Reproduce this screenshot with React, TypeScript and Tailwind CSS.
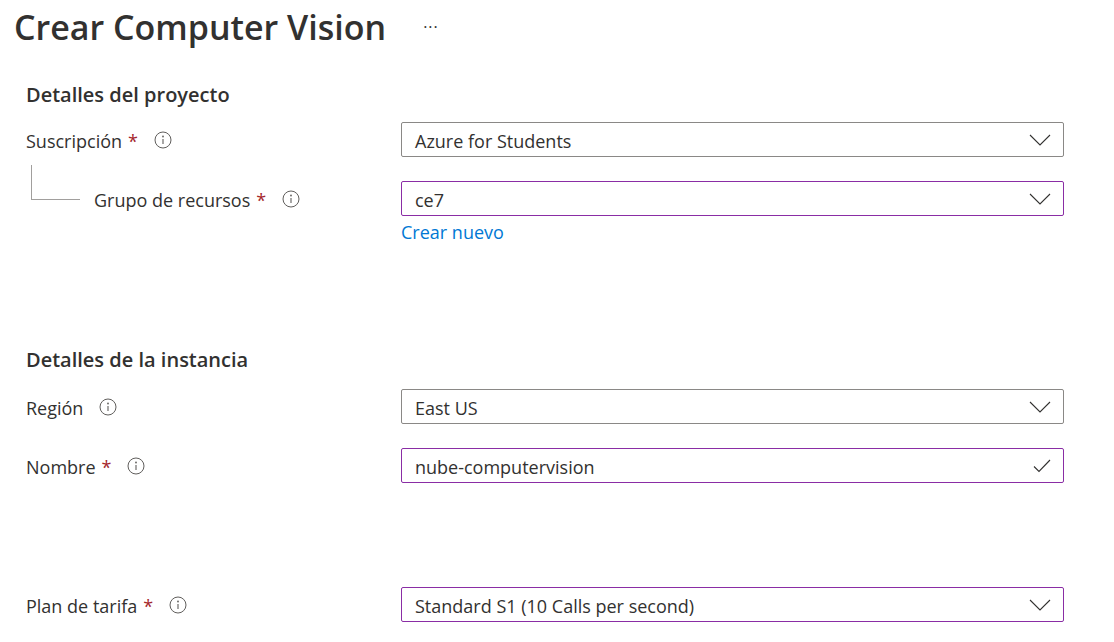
import React from "react";

const font = { fontFamily: '"Open Sans", "Noto Sans", sans-serif' };

const InfoIcon = () => (
  <svg width="18" height="18" viewBox="0 0 18 18" className="ml-[16px] shrink-0">
    <circle cx="9" cy="9" r="8" fill="none" stroke="#605e5c" strokeWidth="1" />
    <circle cx="9" cy="5.5" r="0.9" fill="#605e5c" />
    <path d="M9 8 V13" stroke="#605e5c" strokeWidth="1.1" />
  </svg>
);

const Chevron = () => (
  <svg width="22" height="12" viewBox="0 0 22 12">
    <path d="M1 1 L11 11 L21 1" fill="none" stroke="#323130" strokeWidth="1.1" />
  </svg>
);

const Check = () => (
  <svg width="18" height="14" viewBox="0 0 18 14">
    <path d="M1 7.5 L6 12.5 L17 1" fill="none" stroke="#323130" strokeWidth="1.1" />
  </svg>
);

const Label = ({ text, required }: { text: string; required?: boolean }) => (
  <span className="flex items-center text-[18px] text-[#323130]">
    <span className="pt-[3px]">{text}</span>
    {required && <span className="ml-[6px] pt-[3px] text-[#a4262c]">*</span>}
    <InfoIcon />
  </span>
);

const Field = ({
  value,
  purple,
  icon,
}: {
  value: string;
  purple?: boolean;
  icon: "chevron" | "check";
}) => (
  <div
    className={`flex h-[35px] w-[663px] items-center justify-between rounded-[2px] border pl-[13px] pr-[12px] text-[18px] text-[#323130] ${
      purple ? "border-[#8a2da5]" : "border-[#8a8886]"
    }`}
  >
    <span className="pt-[3px]">{value}</span>
    {icon === "chevron" ? <Chevron /> : <Check />}
  </div>
);

const App = () => {
  return (
    <div className="h-[642px] w-[1114px] overflow-hidden bg-white" style={font}>
      {/* header */}
      <div className="flex h-[54px] items-center pl-[14px]">
        <h1 className="text-[34px] font-semibold leading-none text-[#323130]">Crear Computer Vision</h1>
        <span className="ml-[37px] text-[16px] tracking-[1px] text-[#323130]">···</span>
      </div>

      {/* project details */}
      <h2 className="mt-[27px] pl-[26px] text-[20px] font-semibold leading-[28px] text-[#323130]">
        Detalles del proyecto
      </h2>

      <div className="mt-[13px] flex items-center">
        <div className="w-[401px] pl-[26px]">
          <Label text="Suscripción" required />
        </div>
        <Field value="Azure for Students" icon="chevron" />
      </div>

      <div className="mt-[24px] flex items-center">
        <div className="flex w-[401px] items-center pl-[31px]">
          <div className="mt-[-19px] h-[35px] w-[49px] self-start border-b border-l border-[#a19f9d]" />
          <div className="ml-[14px]">
            <Label text="Grupo de recursos" required />
          </div>
        </div>
        <Field value="ce7" purple icon="chevron" />
      </div>

      <div className="mt-[3px] pl-[401px] text-[18px] leading-[26px] text-[#0078d4]">Crear nuevo</div>

      {/* instance details */}
      <h2 className="mt-[101px] pl-[26px] text-[20px] font-semibold leading-[28px] text-[#323130]">
        Detalles de la instancia
      </h2>

      <div className="mt-[15px] flex items-center">
        <div className="w-[401px] pl-[26px]">
          <Label text="Región" />
        </div>
        <Field value="East US" icon="chevron" />
      </div>

      <div className="mt-[24px] flex items-center">
        <div className="w-[401px] pl-[26px]">
          <Label text="Nombre" required />
        </div>
        <Field value="nube-computervision" purple icon="check" />
      </div>

      <div className="mt-[104px] flex items-center">
        <div className="w-[401px] pl-[26px]">
          <Label text="Plan de tarifa" required />
        </div>
        <Field value="Standard S1 (10 Calls per second)" purple icon="chevron" />
      </div>
    </div>
  );
};

export default App;
